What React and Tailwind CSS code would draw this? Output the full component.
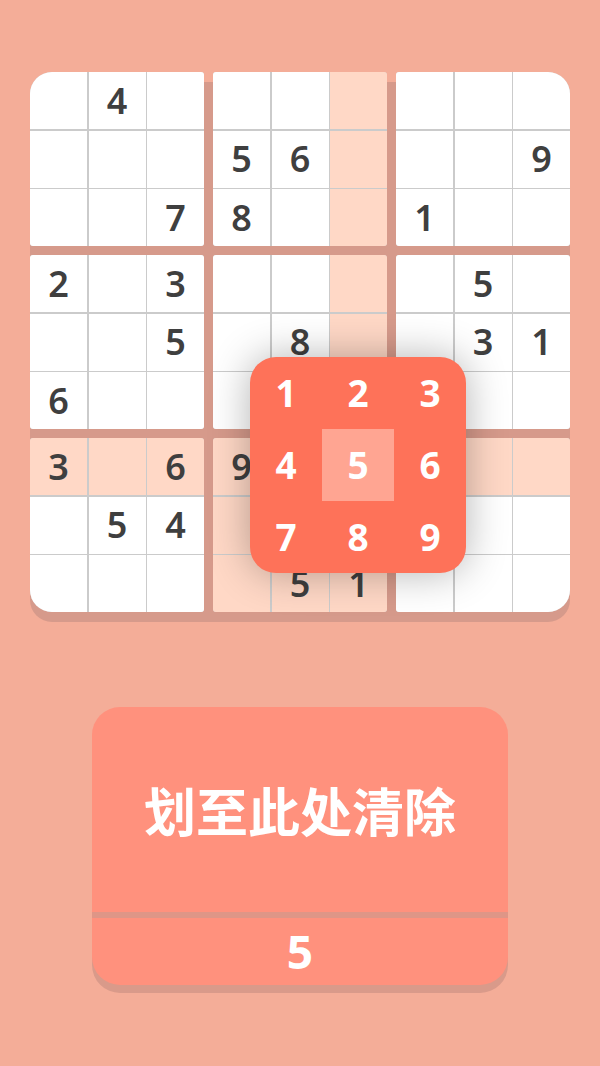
const puzzle = [
  ". 4 . . . . . . .",
  ". . . 5 6 . . . 9",
  ". . 7 8 . . 1 . .",
  "2 . 3 . . . . 5 .",
  ". . 5 . 8 . . 3 1",
  "6 . . . . . . . .",
  "3 . 6 9 . . . . .",
  ". 5 4 . . . . . .",
  ". . . . 5 1 . . .",
].map((r) => r.split(" "));

const selRow = 6;
const selCol = 5;

const isHighlighted = (r, c) =>
  r === selRow ||
  c === selCol ||
  (Math.floor(r / 3) === Math.floor(selRow / 3) && Math.floor(c / 3) === Math.floor(selCol / 3));

const boxCorners = [
  "rounded-tl-[22px]", "", "rounded-tr-[22px]",
  "", "", "",
  "rounded-bl-[22px]", "", "rounded-br-[22px]",
];

const Box = ({ index }) => {
  const br = Math.floor(index / 3) * 3;
  const bc = (index % 3) * 3;
  const cells = [];
  for (let i = 0; i < 3; i++) {
    for (let j = 0; j < 3; j++) {
      const r = br + i;
      const c = bc + j;
      const v = puzzle[r][c];
      cells.push(
        <div
          key={`${i}-${j}`}
          className={`flex items-center justify-center text-[36px] font-semibold text-[#3f3f3f] ${
            isHighlighted(r, c) ? "bg-[#ffd8c6]" : "bg-white"
          }`}
        >
          {v !== "." ? v : ""}
        </div>
      );
    }
  }
  return (
    <div
      className={`grid grid-cols-3 grid-rows-3 gap-[1.5px] bg-[#cbcbcb] h-[174px] overflow-hidden rounded-[3px] ${boxCorners[index]}`}
    >
      {cells}
    </div>
  );
};

const NumberPad = () => (
  <div className="absolute left-[220px] top-[285px] w-[216px] h-[216px] rounded-[26px] bg-[#fe7259] shadow-[0_0_40px_rgba(0,0,0,0.3)] grid grid-cols-3 grid-rows-3 overflow-hidden">
    {[1, 2, 3, 4, 5, 6, 7, 8, 9].map((n) => (
      <div
        key={n}
        className={`flex items-center justify-center text-[37px] font-bold text-white ${
          n === 5 ? "bg-[#ffa592]" : ""
        }`}
      >
        {n}
      </div>
    ))}
  </div>
);

export default function App() {
  return (
    <div
      className="w-[600px] min-h-[1066px] bg-[#f4ad98] flex flex-col items-center pt-[72px]"
      style={{ fontFamily: '"Noto Sans", "Noto Sans CJK SC", sans-serif' }}
    >
      {/* board */}
      <div className="relative w-[540px]">
        <div className="grid grid-cols-3 gap-[9px] rounded-[22px] bg-[linear-gradient(to_bottom,transparent_10px,#d69a8b_10px)] shadow-[0_10px_0_#d69a8b]">
          {[0, 1, 2, 3, 4, 5, 6, 7, 8].map((i) => (
            <Box key={i} index={i} />
          ))}
        </div>
        <NumberPad />
      </div>

      {/* clear target */}
      <div className="mt-[95px] w-[416px] h-[278px] rounded-[28px] bg-[#ff917d] shadow-[0_8px_0_#d99a8a] flex flex-col overflow-hidden">
        <div className="flex-1 flex items-center justify-center">
          <span
            className="text-[52px] font-bold text-white"
            style={{ fontFamily: '"Noto Sans CJK SC", sans-serif' }}
          >
            划至此处清除
          </span>
        </div>
        <div className="h-[6px] bg-[#de9687]" />
        <div className="h-[67px] flex items-center justify-center text-[46px] font-bold text-white">
          5
        </div>
      </div>
    </div>
  );
}
